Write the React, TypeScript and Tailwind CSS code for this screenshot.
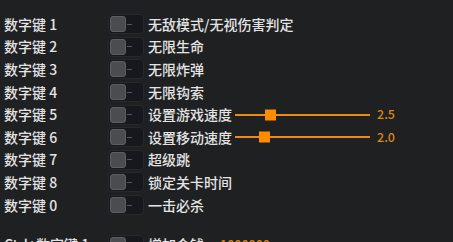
const font = { fontFamily: '"Noto Sans CJK SC", "Liberation Sans", sans-serif' };

type Row = { key: string; label: string; slider?: { pct: number; value: string } };

const rows: Row[] = [
  { key: "数字键 1", label: "无敌模式/无视伤害判定" },
  { key: "数字键 2", label: "无限生命" },
  { key: "数字键 3", label: "无限炸弹" },
  { key: "数字键 4", label: "无限钩索" },
  { key: "数字键 5", label: "设置游戏速度", slider: { pct: 22, value: "2.5" } },
  { key: "数字键 6", label: "设置移动速度", slider: { pct: 17.5, value: "2.0" } },
  { key: "数字键 7", label: "超级跳" },
  { key: "数字键 8", label: "锁定关卡时间" },
  { key: "数字键 0", label: "一击必杀" },
];

const Toggle = () => (
  <div className="w-[36px] h-[20px] shrink-0 rounded-[4px] bg-[#16181d] border border-[#26282d] flex items-center pl-[1px]">
    <div className="w-[16px] h-[16px] rounded-[3px] bg-[#4a4c50] border border-[#5d5f63]" />
    <div className="w-[5px] h-[1px] bg-[#55585e] ml-[1px]" />
  </div>
);

const Slider = ({ pct, value }: { pct: number; value: string }) => (
  <div className="flex items-center ml-[3px]">
    <div className="relative w-[135px] h-[2px] bg-[#f08a0c]">
      <div
        className="absolute top-1/2 -translate-y-1/2 w-[11px] h-[11px] bg-[#ff8c00]"
        style={{ left: `${pct}%` }}
      />
    </div>
    <span className="ml-[7px] text-[12.5px] text-[#d98519]">{value}</span>
  </div>
);

export default function App() {
  return (
    <div className="w-[453px] h-[242px] overflow-hidden bg-[#1f2022] pt-[13px] font-medium" style={font}>
      <div className="flex flex-col">
        {rows.map((r) => (
          <div key={r.key} className="h-[22.6px] flex items-center">
            <span className="w-[108px] pl-[4px] text-[14px] text-[#e4e4e4]">{r.key}</span>
            <Toggle />
            <span className="ml-[4px] text-[14px] text-[#e4e4e4] whitespace-nowrap">{r.label}</span>
            {r.slider && <Slider pct={r.slider.pct} value={r.slider.value} />}
          </div>
        ))}
        <div className="h-[22.6px] flex items-center mt-[17px]">
          <span className="w-[108px] pl-[4px] text-[14px] text-[#e4e4e4] whitespace-nowrap">Ctrl+数字键 1</span>
          <Toggle />
          <span className="ml-[4px] text-[14px] text-[#e4e4e4]">增加金钱</span>
          <span className="ml-[16px] text-[12.5px] text-[#d98519]">1000000</span>
        </div>
      </div>
    </div>
  );
}
